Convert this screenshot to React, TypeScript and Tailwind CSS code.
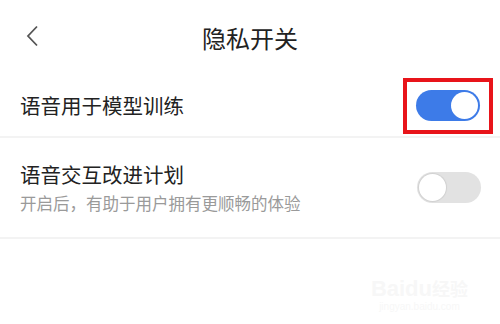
import React, { useState } from 'react'

const font = { fontFamily: '"Noto Sans CJK SC", "Noto Sans", sans-serif' }

function Toggle({ on, onChange }: { on: boolean; onChange: () => void }) {
  return (
    <button
      onClick={onChange}
      className={`flex h-[31px] w-[64px] items-center rounded-full p-[2px] ${
        on ? 'justify-end bg-[#3d7be8]' : 'justify-start bg-[#e2e2e2]'
      }`}
    >
      <span
        className={`block h-[27px] w-[27px] rounded-full bg-white ${
          on ? '' : 'shadow-[0_0_1px_1px_rgba(0,0,0,0.08)]'
        }`}
      />
    </button>
  )
}

export default function App() {
  const [train, setTrain] = useState(true)
  const [improve, setImprove] = useState(false)

  return (
    <div className="relative h-[324px] w-[500px] overflow-hidden bg-white" style={font}>
      {/* HEADER */}
      <div className="flex h-[75px] items-center px-[24px]">
        <svg width="18" height="22" viewBox="0 0 18 22" className="mt-[-4px] shrink-0">
          <path d="M13 1.5 L4 11 L13 20.5" fill="none" stroke="#555" strokeWidth="1.8" />
        </svg>
        <h1 className="flex-1 text-center text-[24px] leading-none text-[#222]">隐私开关</h1>
        <span className="w-[18px] shrink-0" />
      </div>

      {/* ROW 1 */}
      <div className="flex h-[63px] items-center justify-between border-b-2 border-[#f3f3f3] pl-[20px] pr-[20px]">
        <span className="text-[20.5px] text-[#222]">语音用于模型训练</span>
        <div className="mr-[-13px] flex h-[56px] w-[90px] items-center justify-center border-[4px] border-[#e8141a]">
          <Toggle on={train} onChange={() => setTrain(!train)} />
        </div>
      </div>

      {/* ROW 2 */}
      <div className="flex h-[101px] items-center justify-between border-b-2 border-[#f3f3f3] pl-[20px] pr-[19px]">
        <div className="flex flex-col">
          <span className="text-[20.5px] leading-[28px] text-[#222]">语音交互改进计划</span>
          <span className="mt-[3px] text-[16.5px] leading-[24px] text-[#9a9a9a]">开启后，有助于用户拥有更顺畅的体验</span>
        </div>
        <Toggle on={improve} onChange={() => setImprove(!improve)} />
      </div>

      {/* WATERMARK */}
      <div className="absolute right-[32px] top-[278px] flex flex-col items-center text-[#f7f7f7]">
        <span className="text-[22px] font-bold leading-none" style={{ fontFamily: '"Liberation Sans", sans-serif' }}>
          Baidu<span className="text-[18px]" style={font}>经验</span>
        </span>
        <span className="text-[10px] leading-[14px]" style={{ fontFamily: '"Liberation Sans", sans-serif' }}>
          jingyan.baidu.com
        </span>
      </div>
    </div>
  )
}
